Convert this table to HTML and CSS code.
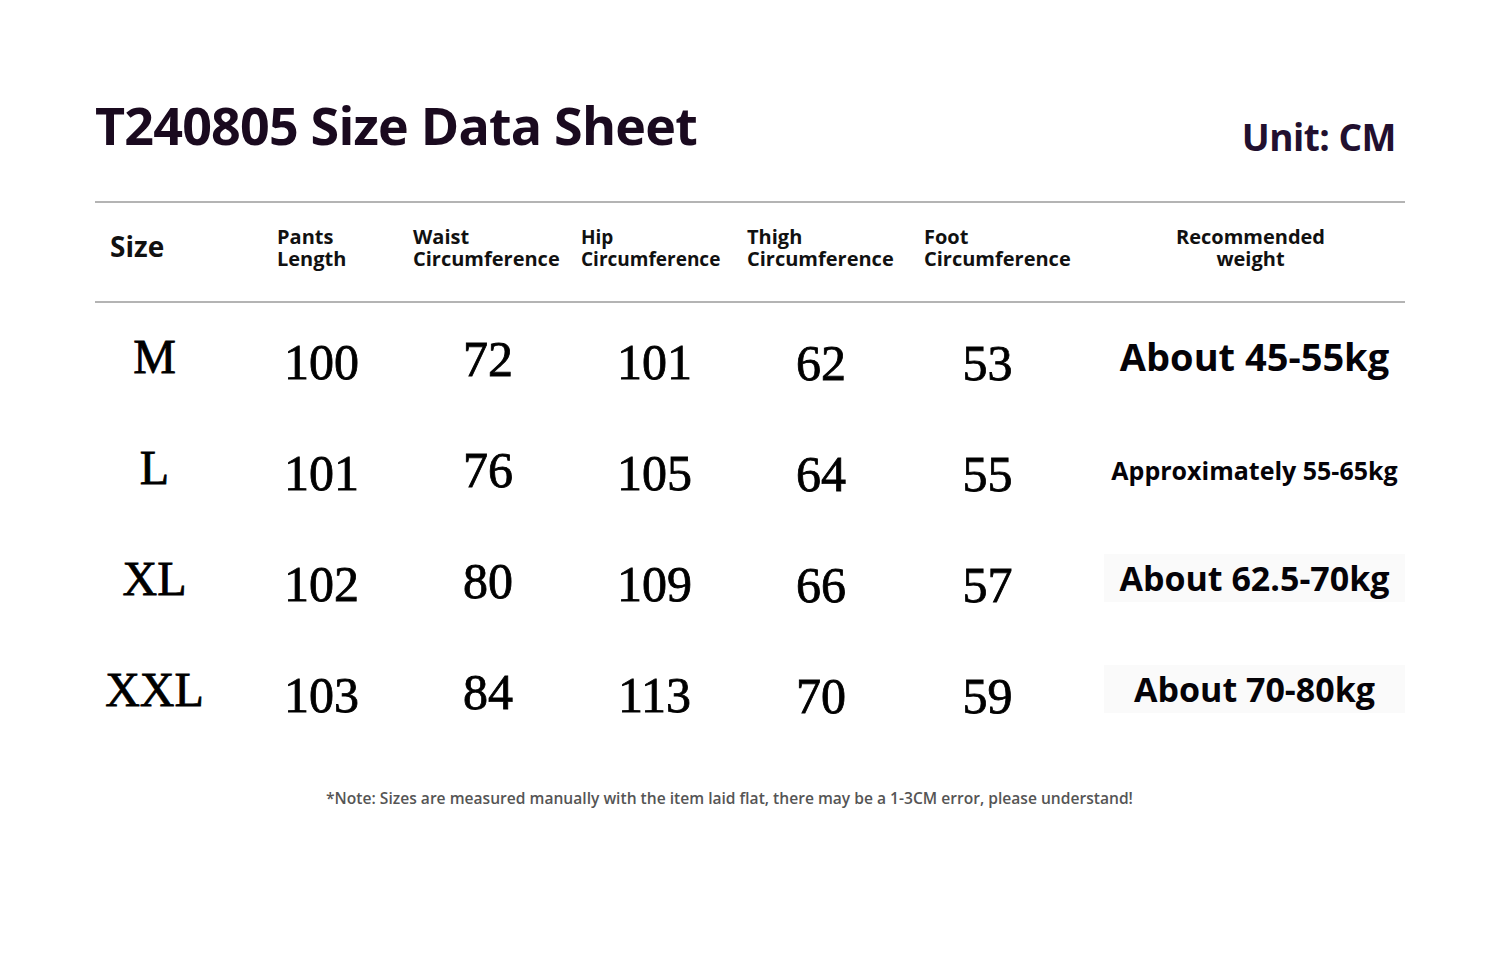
FILE: index.html
```html
<!DOCTYPE html>
<html lang="en">
<head>
<meta charset="utf-8">
<title>T240805 Size Data Sheet</title>
<link rel="stylesheet" href="styles.css">
</head>
<body>
<div class="sheet">
  <div class="title-row">
    <h1 class="title">T240805 Size Data Sheet</h1>
    <div class="unit">Unit: CM</div>
  </div>

  <div class="head">
    <div class="h h-size">Size</div>
    <div class="h"><span class="ln">Pants</span><span class="ln">Length</span></div>
    <div class="h"><span class="ln">Waist</span><span class="ln">Circumference</span></div>
    <div class="h h-tight"><span class="ln">Hip</span><span class="ln">Circumference</span></div>
    <div class="h"><span class="ln">Thigh</span><span class="ln">Circumference</span></div>
    <div class="h"><span class="ln">Foot</span><span class="ln">Circumference</span></div>
    <div class="h h-rec"><span class="ln">Recommended</span><span class="ln">weight</span></div>
  </div>

  <div class="rows">
    <div class="row">
      <div class="c c-size">M</div>
      <div class="c c-mid">100</div>
      <div class="c">72</div>
      <div class="c c-mid">101</div>
      <div class="c c-down">62</div>
      <div class="c c-down">53</div>
      <div class="w w-lg">About 45-55kg</div>
    </div>
    <div class="row">
      <div class="c c-size">L</div>
      <div class="c c-mid">101</div>
      <div class="c">76</div>
      <div class="c c-mid">105</div>
      <div class="c c-down">64</div>
      <div class="c c-down">55</div>
      <div class="w w-sm">Approximately 55-65kg</div>
    </div>
    <div class="row">
      <div class="c c-size">XL</div>
      <div class="c c-mid">102</div>
      <div class="c">80</div>
      <div class="c c-mid">109</div>
      <div class="c c-down">66</div>
      <div class="c c-down">57</div>
      <div class="w w-md w-box">About 62.5-70kg</div>
    </div>
    <div class="row">
      <div class="c c-size">XXL</div>
      <div class="c c-mid">103</div>
      <div class="c">84</div>
      <div class="c c-mid">113</div>
      <div class="c c-down">70</div>
      <div class="c c-down">59</div>
      <div class="w w-md w-box">About 70-80kg</div>
    </div>
  </div>

  <p class="note">*Note: Sizes are measured manually with the item laid flat, there may be a 1-3CM error, please understand!</p>
</div>
</body>
</html>
```

FILE: styles.css
```css
html, body {
  margin: 0;
  padding: 0;
  background: #ffffff;
}

body {
  font-family: "Open Sans", "Noto Sans", "Liberation Sans", sans-serif;
  color: #111;
}

.sheet {
  width: 1310px;
  margin-left: 95px;
  padding-top: 95px;
}

.title-row {
  display: flex;
  justify-content: space-between;
  align-items: flex-start;
  height: 106px;
}

.title {
  margin: 0;
  font-size: 52px;
  line-height: 60px;
  font-weight: 700;
  letter-spacing: -0.8px;
  color: #1a0a1f;
}

.unit {
  margin-top: 20px;
  margin-right: 9px;
  font-size: 37px;
  line-height: 44px;
  font-weight: 700;
  letter-spacing: -0.5px;
  color: #22102f;
}

.head {
  display: grid;
  grid-template-columns: 182px 136px 168px 166px 177px 196px 285px;
  align-items: center;
  height: 98px;
  border-top: 2px solid #b4b4b4;
  border-bottom: 2px solid #b4b4b4;
}

.h {
  display: flex;
  flex-direction: column;
  font-size: 20px;
  font-weight: 700;
  color: #111;
  margin-top: -8px;
}

.h-tight {
  font-size: 19px;
}

.ln {
  display: block;
  height: 22px;
  line-height: 22px;
  white-space: nowrap;
}

.h-size {
  font-size: 28px;
  line-height: 32px;
  padding-left: 15px;
  margin-top: -12px;
}

.h-rec {
  align-items: center;
  padding-right: 24px;
}

.row {
  display: grid;
  grid-template-columns: 143px 167px 166px 167px 166px 167px 334px;
  align-items: center;
  height: 111px;
}

.c {
  font-family: "Liberation Serif", "DejaVu Serif", serif;
  font-size: 50px;
  line-height: 56px;
  text-align: center;
  color: #000;
  -webkit-text-stroke: 0.8px #000;
}

.c-size {
  font-size: 48px;
  margin-left: -24px;
  margin-top: -4px;
}

.c-mid {
  margin-top: 6px;
}

.c-down {
  margin-top: 8px;
}

.w {
  font-weight: 700;
  color: #050308;
  text-align: center;
  white-space: nowrap;
  margin-left: 33px;
  line-height: 48px;
}

.w-lg {
  font-size: 38px;
  margin-top: -6px;
}

.w-sm {
  font-size: 25px;
}

.w-md {
  font-size: 34px;
  margin-top: -6px;
}

.w-box {
  background: #fafafa;
}

.note {
  margin: 41px 0 0 0;
  padding-right: 41px;
  text-align: center;
  font-size: 15.6px;
  line-height: 20px;
  font-weight: 600;
  color: #555;
}
```
